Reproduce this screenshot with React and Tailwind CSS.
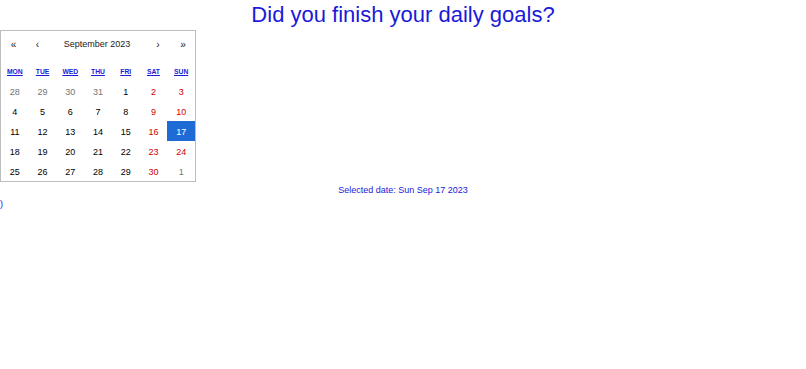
import React from "react";

const weeks = [
  [["28", "n"], ["29", "n"], ["30", "n"], ["31", "n"], ["1", ""], ["2", "w"], ["3", "w"]],
  [["4", ""], ["5", ""], ["6", ""], ["7", ""], ["8", ""], ["9", "w"], ["10", "w"]],
  [["11", ""], ["12", ""], ["13", ""], ["14", ""], ["15", ""], ["16", "w"], ["17", "a"]],
  [["18", ""], ["19", ""], ["20", ""], ["21", ""], ["22", ""], ["23", "w"], ["24", "w"]],
  [["25", ""], ["26", ""], ["27", ""], ["28", ""], ["29", ""], ["30", "w"], ["1", "n"]],
];

const days = ["MON", "TUE", "WED", "THU", "FRI", "SAT", "SUN"];

function tileClass(t) {
  if (t === "n") return "text-[#757575]";
  if (t === "w") return "text-[#d10000]";
  if (t === "a") return "bg-[#1f6bd6] text-white";
  return "text-black";
}

export default function App() {
  return (
    <div className="bg-white w-[806px] h-[369px] font-['Liberation_Sans',Arial,sans-serif]">
      <h1 className="h-[30px] text-center text-[22px] leading-[29px] text-[#1a1ad8]">
        Did you finish your daily goals?
      </h1>
      <div className="w-[196px] border border-[#bdbdbd] bg-white text-[9px]">
        <div className="flex h-[26px] mb-[7px] items-center text-[#222]">
          <button className="w-[25px] h-full text-[10px] text-center">«</button>
          <button className="w-[23px] h-full text-[10px] text-center">‹</button>
          <span className="flex-1 text-center text-[9px] pt-[1px]">September 2023</span>
          <button className="w-[26px] h-full text-[10px] text-center">›</button>
          <button className="w-[24px] h-full text-[10px] text-center">»</button>
        </div>
        <div className="grid grid-cols-7 h-[17px] items-center">
          {days.map((d) => (
            <div key={d} className="text-center text-[6.75px] font-bold underline text-[#1a1ad8]">
              {d}
            </div>
          ))}
        </div>
        <div className="grid grid-cols-7">
          {weeks.flat().map(([n, t], i) => (
            <div key={i} className={`h-[20px] flex items-center justify-center pt-[4px] ${tileClass(t)}`}>
              {n}
            </div>
          ))}
        </div>
      </div>
      <p className="text-center text-[9px] leading-[14px] text-[#1a1ad8] pt-[1px]">
        Selected date: Sun Sep 17 2023
      </p>
      <p className="text-[9px] leading-[14px] text-[#1a1ad8]">)</p>
    </div>
  );
}
